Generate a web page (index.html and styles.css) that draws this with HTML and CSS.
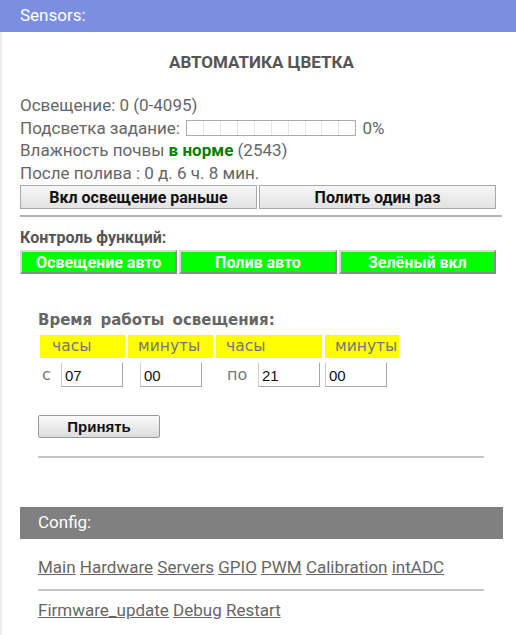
FILE: index.html
```html
<!DOCTYPE html>
<html lang="ru">
<head>
<meta charset="utf-8">
<link rel="stylesheet" href="styles.css">
</head>
<body>
<div class="header">Sensors:</div>
<div class="page">
  <h1 class="title">АВТОМАТИКА ЦВЕТКА</h1>
  <div class="info">
    <div>Освещение: 0 (0-4095)</div>
    <div class="barline">Подсветка задание: <span class="bar"><i></i><i></i><i></i><i></i><i></i><i></i><i></i><i></i><i></i><i></i></span> 0%</div>
    <div>Влажность почвы <b class="ok">в норме</b> (2543)</div>
    <div>После полива : 0 д. 6 ч. 8 мин.</div>
  </div>
  <div class="btnrow">
    <button class="gbtn">Вкл освещение раньше</button>
    <button class="gbtn">Полить один раз</button>
  </div>
  <hr class="line">
  <div class="subtitle">Контроль функций:</div>
  <div class="greenrow">
    <button class="green">Освещение авто</button>
    <button class="green">Полив авто</button>
    <button class="green">Зелёный вкл</button>
  </div>

  <div class="timebox">
    <div class="ttitle">Время работы освещения:</div>
    <div class="tgrid">
      <div class="ycell">часы</div>
      <div class="ycell">минуты</div>
      <div class="ycell">часы</div>
      <div class="ycell">минуты</div>
      <div class="icell"><span class="lbl">с</span><input class="tin" value="07"></div>
      <div class="icell pad"><input class="tin" value="00"></div>
      <div class="icell"><span class="lbl lbl2">по</span><input class="tin" value="21"></div>
      <div class="icell"><input class="tin" value="00"></div>
    </div>
    <button class="apply">Принять</button>
    <hr class="line2">
  </div>

  <div class="config">Config:</div>
  <div class="links">
    <a href="#">Main</a> <a href="#">Hardware</a> <a href="#">Servers</a> <a href="#">GPIO</a> <a href="#">PWM</a> <a href="#">Calibration</a> <a href="#">intADC</a>
  </div>
  <hr class="line3">
  <div class="links links2">
    <a href="#">Firmware_update</a> <a href="#">Debug</a> <a href="#">Restart</a>
  </div>
</div>
</body>
</html>
```
FILE: styles.css
```css
html, body {
  margin: 0;
  padding: 0;
  background: #fff;
}
body {
  font-family: Roboto, "Liberation Sans", sans-serif;
  color: #666;
  width: 516px;
}
.header {
  height: 32px;
  line-height: 31px;
  background: #7b8ee0;
  color: #fff;
  font-size: 17px;
  padding-left: 20px;
}
.page {
  border-left: 2px solid #ececec;
  padding: 0 13px 20px 18px;
  min-height: 603px;
  box-sizing: border-box;
}
.title {
  margin: 0;
  padding-top: 20px;
  height: 44px;
  box-sizing: border-box;
  text-align: center;
  font-size: 17px;
  font-weight: bold;
  color: #555;
  line-height: 20px;
}
.info {
  font-size: 17px;
  line-height: 22.5px;
  padding-top: 18px;
}
.ok {
  color: #008000;
}
.barline {
  display: flex;
  align-items: center;
  white-space: pre;
}
.bar {
  display: inline-flex;
  width: 170px;
  height: 16px;
  border: 1px solid #aaa;
  box-sizing: border-box;
  margin: 0 2px 0 2px;
}
.bar i {
  flex: 1;
  border-right: 1px solid #e6e6e6;
}
.bar i:last-child {
  border-right: none;
}
.btnrow {
  display: flex;
  gap: 2px;
  width: 476px;
  margin-top: 1px;
}
.gbtn {
  flex: 1;
  height: 24px;
  border: 1px solid #a8a8a8;
  background: linear-gradient(#f7f7f7, #e2e2e2);
  font-family: Roboto, "Liberation Sans", sans-serif;
  font-weight: bold;
  font-size: 16px;
  color: #111;
  padding: 0;
}
.line {
  border: none;
  border-top: 2px solid #b4b4b4;
  margin: 6px 1px 0 0;
  height: 0;
}
.subtitle {
  font-weight: bold;
  font-size: 16px;
  color: #555;
  margin-top: 12px;
  line-height: 18px;
}
.greenrow {
  display: flex;
  gap: 2px;
  width: 476px;
  margin-top: 3px;
}
.green {
  flex: 1;
  height: 24px;
  background: #00ff00;
  border: 2px solid;
  border-color: #d8d8d8 #8a8a8a #8a8a8a #d8d8d8;
  color: #fff;
  font-family: Roboto, "Liberation Sans", sans-serif;
  font-weight: bold;
  font-size: 16px;
  padding: 0;
}
.timebox {
  padding: 37px 0 0 18px;
  font-family: "DejaVu Sans", sans-serif;
}
.ttitle {
  font-weight: bold;
  font-size: 15px;
  color: #666;
  word-spacing: 3px;
  line-height: 18px;
}
.tgrid {
  display: grid;
  grid-template-columns: 85px 85px 106px 74px;
  column-gap: 3px;
  row-gap: 4px;
  margin: 6px 0 0 2px;
}
.ycell {
  background: #ffff00;
  height: 23px;
  line-height: 23px;
  font-size: 15.5px;
  color: #777;
  padding-left: 10px;
  white-space: nowrap;
}
.ycell:first-child {
  padding-left: 12px;
}
.icell {
  display: flex;
  align-items: center;
  height: 25px;
}
.icell.pad {
  padding-left: 12px;
}
.lbl {
  font-size: 16px;
  color: #777;
  width: 21px;
  padding-left: 2px;
  box-sizing: border-box;
}
.lbl2 {
  width: 42px;
  padding-left: 11px;
}
.tin {
  width: 62px;
  height: 25px;
  box-sizing: border-box;
  border: 1px solid;
  border-color: #fff #a8a8a8 #a8a8a8 #cfcfcf;
  font-family: "Liberation Sans", sans-serif;
  font-size: 15px;
  color: #111;
  padding: 2px 3px 0;
  margin: 0;
}
.apply {
  display: block;
  margin-top: 28px;
  width: 122px;
  height: 23px;
  border: 1px solid #999;
  border-radius: 2px;
  background: linear-gradient(#fafafa, #dcdcdc);
  font-family: "Liberation Sans", sans-serif;
  font-weight: bold;
  font-size: 15px;
  color: #111;
  padding: 0;
}
.line2 {
  border: none;
  border-top: 2px solid #c4c4c4;
  margin: 18px 0 0 0;
  width: 446px;
  height: 0;
}
.config {
  margin-top: 49px;
  height: 32px;
  line-height: 31px;
  background: #808080;
  color: #fff;
  font-size: 17px;
  padding-left: 18px;
}
.links {
  font-size: 17px;
  padding: 18px 0 0 18px;
  line-height: 20px;
}
.links a {
  color: #666;
  text-decoration: underline;
}
.line3 {
  border: none;
  border-top: 2px solid #c4c4c4;
  margin: 12px 0 0 18px;
  width: 446px;
  height: 0;
}
.links2 {
  padding-top: 9px;
}
```
